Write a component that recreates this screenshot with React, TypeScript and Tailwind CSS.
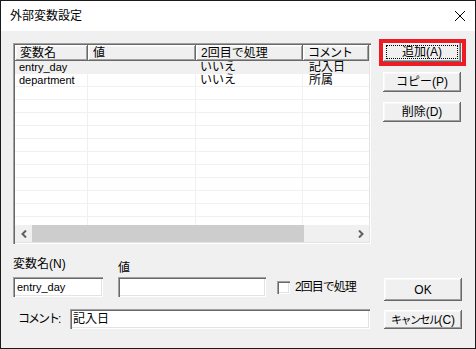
const raised =
  "shadow-[inset_-1px_-1px_0_#696969,inset_1px_1px_0_#ffffff,inset_-2px_-2px_0_#a0a0a0,inset_2px_2px_0_#f8f8f8]";
const sunken =
  "shadow-[inset_1px_1px_0_#a0a0a0,inset_2px_2px_0_#696969,inset_-1px_-1px_0_#ffffff,inset_-2px_-2px_0_#e3e3e3]";

function Btn({ children, className = "", focused = false }: { children: React.ReactNode; className?: string; focused?: boolean }) {
  return (
    <div className={`relative flex w-[78px] shrink-0 items-center justify-center bg-[#f0f0f0] leading-[14px] text-black ${raised} ${className}`}>
      {focused && <div className="absolute inset-[3px] border border-dotted border-black" />}
      <span className="relative">{children}</span>
    </div>
  );
}

function Chevron({ dir }: { dir: "l" | "r" }) {
  return (
    <svg width="6" height="8" viewBox="0 0 6 8">
      <path d={dir === "l" ? "M5 0.5 L1.5 4 L5 7.5" : "M1 0.5 L4.5 4 L1 7.5"} fill="none" stroke="#606060" strokeWidth="2" />
    </svg>
  );
}

const cols = ["w-[73px]", "w-[108px]", "w-[107px]", "w-[66px]"];
const rows = [
  { n: "entry_day", v: "", t: "いいえ", c: "記入日", sel: true },
  { n: "department", v: "", t: "いいえ", c: "所属", sel: false },
  ...Array.from({ length: 11 }, () => ({ n: "", v: "", t: "", c: "", sel: false })),
];

function ListView() {
  return (
    <div className={`flex h-[201px] w-[358px] shrink-0 flex-col bg-white p-[2px] ${sunken}`}>
      <div className="flex h-[16px] shrink-0 overflow-hidden">
        {["変数名", "値", "2回目で処理", "コメント"].map((h, i) => (
          <div key={h} className={`${cols[i]} shrink-0 bg-[#f0f0f0] pl-[5px] text-[12px] leading-[16px] ${i === 3 ? "tracking-[-1px] pl-[2px]" : ""} ${raised}`}>
            {h}
          </div>
        ))}
      </div>
      <div className="flex-1 overflow-hidden">
        {rows.map((r, k) => (
          <div key={k} className={`flex h-[13px] border-b border-[#f0f0f0] text-[12px] leading-[12px] ${r.sel ? "bg-[#f0f0f0]" : ""}`}>
            <div className={`${cols[0]} shrink-0 border-r border-[#f0f0f0] pl-[4px] text-[11px]`}>{r.n}</div>
            <div className={`${cols[1]} shrink-0 border-r border-[#f0f0f0] pl-[4px]`}>{r.v}</div>
            <div className={`${cols[2]} shrink-0 border-r border-[#f0f0f0] pl-[4px]`}>{r.t}</div>
            <div className={`${cols[3]} shrink-0 pl-[6px]`}>{r.c}</div>
          </div>
        ))}
      </div>
      <div className="flex h-[17px] shrink-0 items-center bg-[#f0f0f0]">
        <div className="flex h-full w-[17px] items-center justify-center">
          <Chevron dir="l" />
        </div>
        <div className="h-full w-[272px] bg-[#cdcdcd]" />
        <div className="flex-1" />
        <div className="flex h-full w-[17px] items-center justify-center">
          <Chevron dir="r" />
        </div>
      </div>
    </div>
  );
}

export default function App() {
  return (
    <div className="flex h-[349px] w-[476px] flex-col border border-[#1a1a1a] font-['Liberation_Sans','Noto_Sans_CJK_JP',sans-serif] text-black">
      <div className="flex h-[30px] shrink-0 items-center justify-between bg-white pl-[9px] pr-[10px]">
        <span className="text-[12px] leading-[14px]">外部変数設定</span>
        <svg width="10" height="10" viewBox="0 0 10 10">
          <path d="M0 0 L10 10 M10 0 L0 10" stroke="#000" strokeWidth="1" />
        </svg>
      </div>
      <div className="flex-1 bg-[#f0f0f0] pl-[12px] pr-[13px] pt-[12px]">
        <div className="flex gap-[12px]">
          <ListView />
          <div className="mt-[-1px] flex flex-col gap-[10px]">
            <div className="relative">
              <Btn focused className="h-[20px] text-[12px]">追加(A)</Btn>
              <div className="absolute left-[-4px] top-[-3px] h-[27px] w-[87px] border-4 border-[#ed1c24]" />
            </div>
            <Btn className="h-[20px] text-[12px]">コピー(P)</Btn>
            <Btn className="h-[20px] text-[12px]">削除(D)</Btn>
          </div>
        </div>

        <div className="mt-[13px] flex items-start">
          <div className="flex w-[90px] shrink-0 flex-col">
            <span className="text-[12px] leading-[14px]">変数名(N)</span>
            <div className={`mt-[6px] h-[20px] bg-white pl-[4px] text-[11px] leading-[20px] ${sunken}`}>entry_day</div>
          </div>
          <div className="ml-[15px] flex w-[148px] shrink-0 flex-col">
            <span className="mt-[4px] text-[12px] leading-[14px]">値</span>
            <div className={`mt-[2px] h-[20px] bg-white ${sunken}`} />
          </div>
          <div className="ml-[11px] mt-[24px] flex items-center">
            <div className={`h-[13px] w-[13px] bg-white ${sunken}`} />
            <span className="ml-[5px] text-[12px] leading-[13px] tracking-[-1px]">2回目で処理</span>
          </div>
          <Btn className="ml-auto mt-[21px] h-[23px] text-[12px]">OK</Btn>
        </div>

        <div className="mt-[8px] flex items-start">
          <span className="ml-[5px] mt-[3px] w-[52px] shrink-0 text-[12px] leading-[14px] tracking-[-2px]">コメント:</span>
          <div className={`h-[20px] w-[300px] shrink-0 bg-white pl-[3px] text-[12px] leading-[20px] ${sunken}`}>記入日</div>
          <Btn className="ml-auto mt-[1px] h-[19px] text-[12px]">
            <span className="text-[11px] tracking-[-1.5px]">キャンセル</span>(C)
          </Btn>
        </div>
      </div>
    </div>
  );
}
